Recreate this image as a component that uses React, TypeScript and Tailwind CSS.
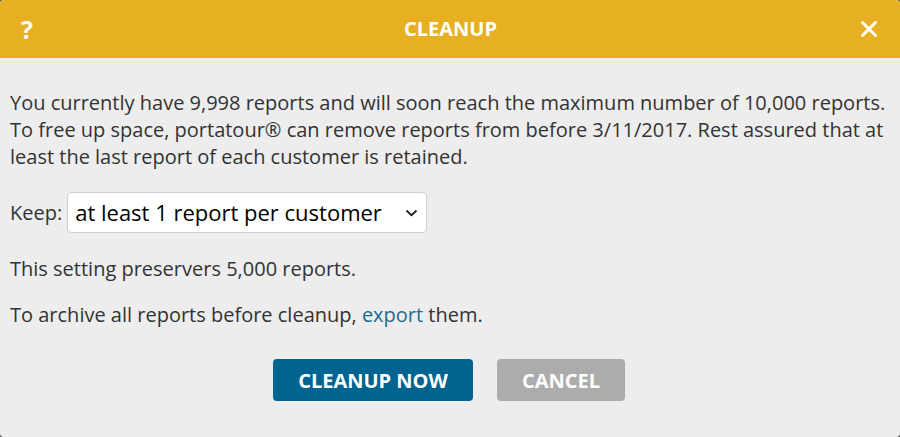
import React from "react";

export default function App() {
  return (
    <div className="w-[900px] h-[437px] bg-[#5a5a5a]" style={{ fontFamily: '"Open Sans", sans-serif' }}>
      <div className="w-full h-full rounded-[4px] overflow-hidden bg-[#ededed] flex flex-col">
        <div className="h-[58px] bg-[#e6b022] flex items-center justify-between pl-[21px] pr-[20px] text-white">
          <span className="text-[25px] font-bold w-[20px] leading-[28px]">?</span>
          <span className="text-[20px] font-bold leading-[28px]">CLEANUP</span>
          <svg width="18" height="18" viewBox="0 0 18 18" className="mr-[2px]">
            <path d="M2.5 2.5 L15.5 15.5 M15.5 2.5 L2.5 15.5" stroke="white" strokeWidth="3" strokeLinecap="round" />
          </svg>
        </div>
        <div className="px-[10px] pt-[31px] text-[#333] text-[20px] leading-[27px]">
          <p>
            You currently have 9,998 reports and will soon reach the maximum number of 10,000 reports. To free up space, portatour® can remove reports from before 3/11/2017. Rest assured that at least the last report of each customer is retained.
          </p>
          <div className="flex items-center mt-[22px] gap-[5px]">
            <span>Keep:</span>
            <div className="w-[360px] h-[41px] bg-white border border-[#cfcfcf] rounded-[4px] flex items-center justify-between pl-[7px] pr-[8px] text-black text-[22px]">
              <span>at least 1 report per customer</span>
              <svg width="13" height="8" viewBox="0 0 13 8">
                <path d="M1.5 1.5 L6.5 6.2 L11.5 1.5" stroke="#222" strokeWidth="1.9" fill="none" />
              </svg>
            </div>
          </div>
          <p className="mt-[22px]">This setting preservers 5,000 reports.</p>
          <p className="mt-[19px]">
            To archive all reports before cleanup, <span className="text-[#1b6a94]">export</span> them.
          </p>
          <div className="flex justify-center gap-[24px] mt-[31px] pr-[2px]">
            <button className="w-[200px] h-[42px] bg-[#006491] rounded-[4px] text-white font-bold text-[20px]">CLEANUP NOW</button>
            <button className="w-[128px] h-[42px] bg-[#acacac] rounded-[4px] text-white font-bold text-[20px]">CANCEL</button>
          </div>
        </div>
      </div>
    </div>
  );
}
